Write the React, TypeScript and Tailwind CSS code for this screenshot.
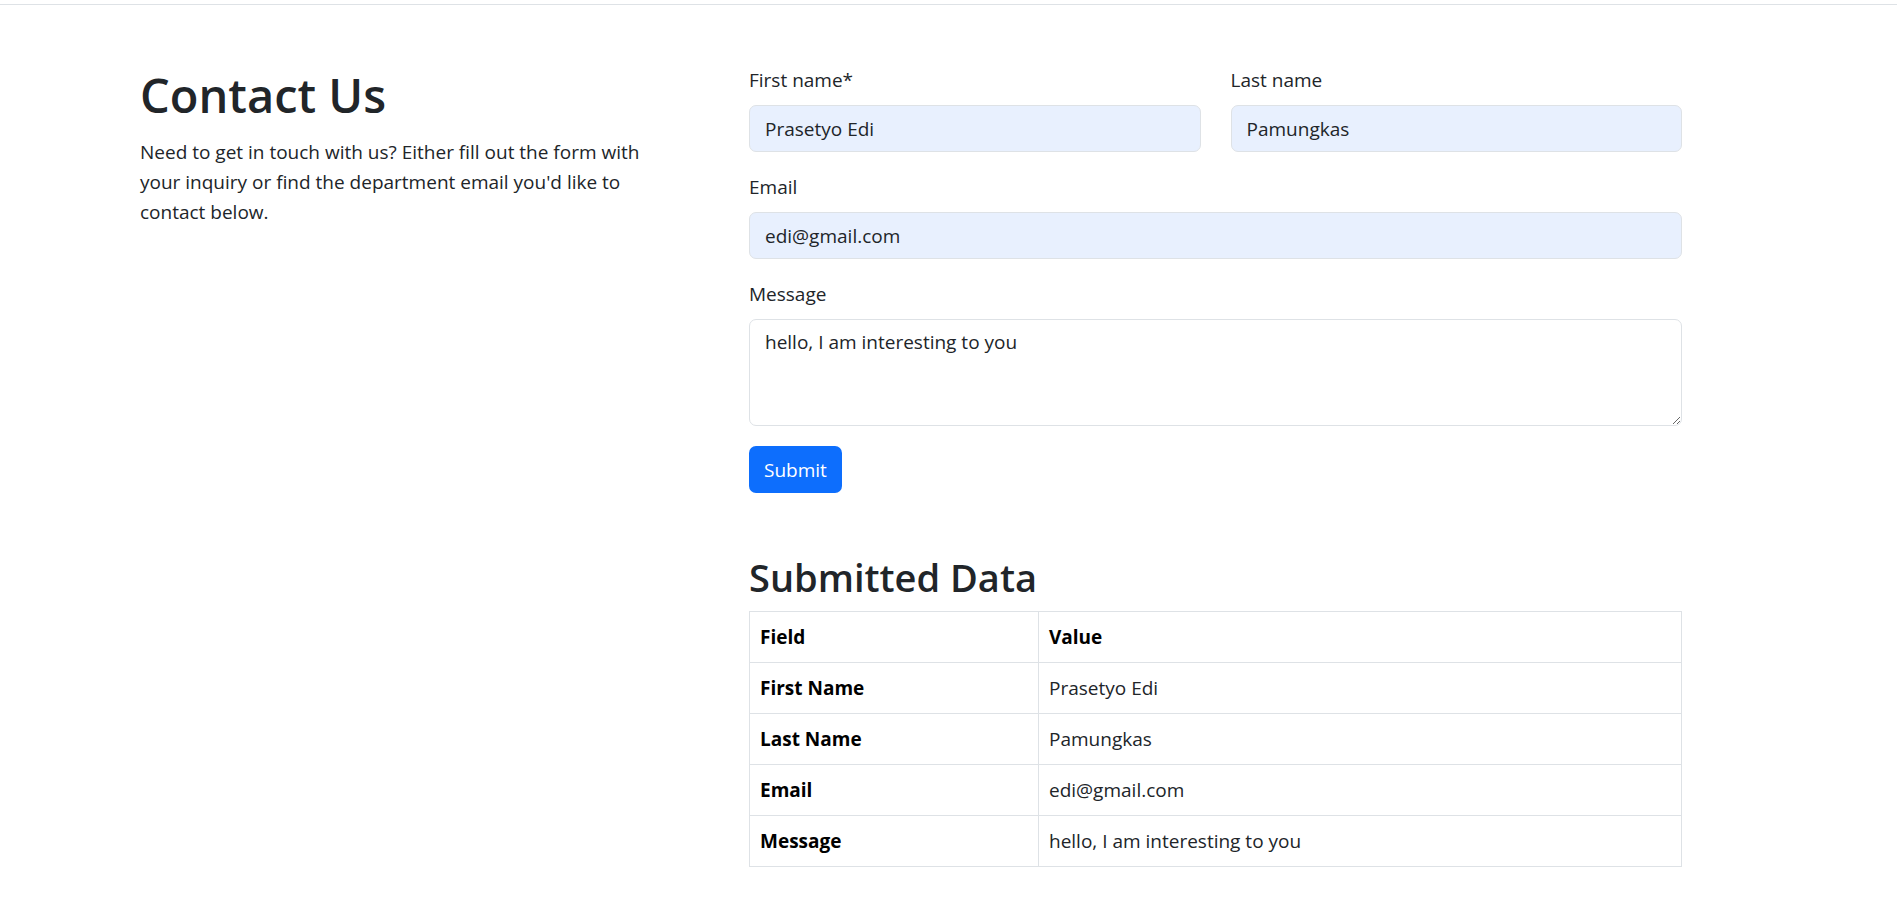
import React from "react";

const rows: [string, string][] = [
  ["First Name", "Prasetyo Edi"],
  ["Last Name", "Pamungkas"],
  ["Email", "edi@gmail.com"],
  ["Message", "hello, I am interesting to you"],
];

const inputCls =
  "block w-full h-[47px] px-[15px] rounded-[7px] border border-[#dee2e6] bg-[#e8f0fe] text-[#212529] text-[19px] outline-none";

export default function App() {
  return (
    <div
      className="min-h-screen bg-white text-[#212529] text-[19px] leading-[30px]"
      style={{ fontFamily: '"Segoe UI", "Open Sans", "Noto Sans", sans-serif' }}
    >
      <div className="h-[5px] border-b border-[#dee2e6]" />
      <div className="flex pl-[140px] pt-[60px]">
        <div className="w-[609px] shrink-0">
          <h1 className="text-[47px] leading-[60px] font-semibold mb-[12px]">Contact Us</h1>
          <p>
            Need to get in touch with us? Either fill out the form with
            <br />
            your inquiry or find the department email you'd like to
            <br />
            contact below.
          </p>
        </div>
        <div className="w-[933px] shrink-0">
          <div className="grid grid-cols-2 gap-x-[30px] mb-[20px]">
            <div>
              <label className="block mb-[10px]">First name*</label>
              <input readOnly value="Prasetyo Edi" className={inputCls} />
            </div>
            <div>
              <label className="block mb-[10px]">Last name</label>
              <input readOnly value="Pamungkas" className={inputCls} />
            </div>
          </div>
          <div className="mb-[20px]">
            <label className="block mb-[10px]">Email</label>
            <input readOnly value="edi@gmail.com" className={inputCls} />
          </div>
          <div className="mb-[20px]">
            <label className="block mb-[10px]">Message</label>
            <textarea
              readOnly
              rows={3}
              value="hello, I am interesting to you"
              className="block w-full h-[107px] px-[15px] py-[7px] rounded-[7px] border border-[#dee2e6] bg-white text-[#212529] text-[19px] leading-[30px] outline-none"
            />
          </div>
          <button className="h-[47px] px-[15px] rounded-[7px] bg-[#0d6efd] text-white text-[19px]">Submit</button>

          <h2 className="mt-[60px] mb-[10px] text-[38px] leading-[48px] font-semibold">Submitted Data</h2>
          <table className="w-full border-collapse border border-[#dee2e6]">
            <thead>
              <tr>
                <th className="w-[289px] border border-[#dee2e6] px-[10px] py-[10px] text-left font-bold text-black">Field</th>
                <th className="border border-[#dee2e6] px-[10px] py-[10px] text-left font-bold text-black">Value</th>
              </tr>
            </thead>
            <tbody>
              {rows.map(([f, v]) => (
                <tr key={f}>
                  <th className="border border-[#dee2e6] px-[10px] py-[10px] text-left font-bold text-black">{f}</th>
                  <td className="border border-[#dee2e6] px-[10px] py-[10px] text-[#212529]">{v}</td>
                </tr>
              ))}
            </tbody>
          </table>
        </div>
      </div>
    </div>
  );
}
